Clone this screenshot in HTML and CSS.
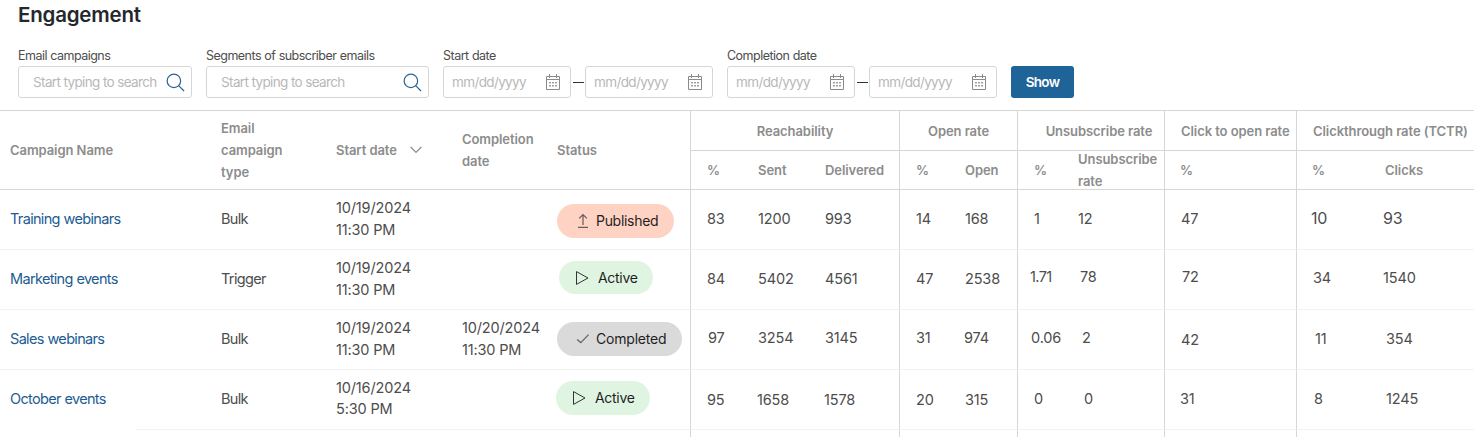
FILE: index.html
```html
<!DOCTYPE html>
<html lang="en">
<head>
<meta charset="utf-8">
<title>Engagement</title>
<link rel="stylesheet" href="styles.css">
</head>
<body>
<svg class="sprite" aria-hidden="true">
  <symbol id="search" viewBox="0 0 20 20"><circle cx="8.3" cy="8.3" r="7.1"/><path d="M13.3 13.3 19 19"/></symbol>
  <symbol id="calendar" viewBox="0 0 16 18"><path d="M1.5 3.5h13v13h-13zM1.5 6.5h13M4.5 1v4M11.5 1v4"/><path class="dots" d="M4.200 9h1.600v1.600H4.200zM7.200 9h1.600v1.600H7.200zM10.200 9h1.600v1.600h-1.600zM4.200 12h1.600v1.600H4.200zM7.200 12h1.600v1.600H7.200zM10.200 12h1.600v1.600h-1.600z"/></symbol>
  <symbol id="upload" viewBox="0 0 12 16"><path d="M6 12V2M2.2 5.3 6 1.500l3.800 3.800M1 14.300h10"/></symbol>
  <symbol id="play" viewBox="0 0 14 16"><path d="M1.500 1.600v12.800L13 8z"/></symbol>
  <symbol id="check" viewBox="0 0 14 12"><path d="M1.200 6.400 4.800 9.600 12.600 1.600"/></symbol>
</svg>

<h1 class="title">Engagement</h1>

<form class="filters">
  <div class="field field-campaigns">
    <label class="label">Email campaigns</label>
    <div class="input"><span>Start typing to search</span><svg class="icon-search"><use href="#search"/></svg></div>
  </div>
  <div class="field field-segments">
    <label class="label">Segments of subscriber emails</label>
    <div class="input"><span>Start typing to search</span><svg class="icon-search"><use href="#search"/></svg></div>
  </div>
  <div class="field">
    <label class="label">Start date</label>
    <div class="range">
      <div class="input date"><span>mm/dd/yyyy</span><svg class="icon-calendar"><use href="#calendar"/></svg></div>
      <i class="dash"></i>
      <div class="input date"><span>mm/dd/yyyy</span><svg class="icon-calendar"><use href="#calendar"/></svg></div>
    </div>
  </div>
  <div class="field">
    <label class="label">Completion date</label>
    <div class="range">
      <div class="input date"><span>mm/dd/yyyy</span><svg class="icon-calendar"><use href="#calendar"/></svg></div>
      <i class="dash"></i>
      <div class="input date"><span>mm/dd/yyyy</span><svg class="icon-calendar"><use href="#calendar"/></svg></div>
    </div>
  </div>
  <button class="show" type="button">Show</button>
</form>

<div class="table">
  <div class="row head">
    <div class="cell tall">Campaign Name</div>
    <div class="cell tall">Email<br>campaign<br>type</div>
    <div class="cell tall">Start date<svg class="icon-sort" viewBox="0 0 12 8"><path d="M.7 1 6 6.500 11.300 1"/></svg></div>
    <div class="cell tall">Completion<br>date</div>
    <div class="cell tall">Status</div>
    <div class="cell group span3">Reachability</div>
    <div class="cell group span2">Open rate</div>
    <div class="cell group span2 shifted">Unsubscribe rate</div>
    <div class="cell group start">Click to open rate</div>
    <div class="cell group span2 start">Clickthrough rate (TCTR)</div>
    <div class="cell first">%</div>
    <div class="cell">Sent</div>
    <div class="cell">Delivered</div>
    <div class="cell first">%</div>
    <div class="cell">Open</div>
    <div class="cell first">%</div>
    <div class="cell">Unsubscribe<br>rate</div>
    <div class="cell first back-1">%</div>
    <div class="cell first back-1">%</div>
    <div class="cell">Clicks</div>
  </div>

  <div class="row">
    <div class="cell text link">Training webinars</div>
    <div class="cell text">Bulk</div>
    <div class="cell">10/19/2024<br>11:30 PM</div>
    <div class="cell"></div>
    <div class="cell"><span class="pill published"><svg class="icon-upload"><use href="#upload"/></svg>Published</span></div>
    <div class="cell first">83</div>
    <div class="cell">1200</div>
    <div class="cell">993</div>
    <div class="cell first">14</div>
    <div class="cell">168</div>
    <div class="cell first">1</div>
    <div class="cell">12</div>
    <div class="cell first">47</div>
    <div class="cell first large back-2">10</div>
    <div class="cell large back-2">93</div>
  </div>

  <div class="row">
    <div class="cell text link">Marketing events</div>
    <div class="cell text">Trigger</div>
    <div class="cell">10/19/2024<br>11:30 PM</div>
    <div class="cell"></div>
    <div class="cell"><span class="pill active inset"><svg class="icon-play"><use href="#play"/></svg>Active</span></div>
    <div class="cell first">84</div>
    <div class="cell">5402</div>
    <div class="cell">4561</div>
    <div class="cell first">47</div>
    <div class="cell">2538</div>
    <div class="cell first condensed back-4 up-2">1.71</div>
    <div class="cell in-2 up-2">78</div>
    <div class="cell first in-1 up-2">72</div>
    <div class="cell first up-1">34</div>
    <div class="cell back-2 up-1">1540</div>
  </div>

  <div class="row">
    <div class="cell text link">Sales webinars</div>
    <div class="cell text">Bulk</div>
    <div class="cell">10/19/2024<br>11:30 PM</div>
    <div class="cell">10/20/2024<br>11:30 PM</div>
    <div class="cell"><span class="pill completed"><svg class="icon-check"><use href="#check"/></svg>Completed</span></div>
    <div class="cell first in-1 up-1">97</div>
    <div class="cell up-1">3254</div>
    <div class="cell up-1">3145</div>
    <div class="cell first up-1">31</div>
    <div class="cell back-1 up-1">974</div>
    <div class="cell first back-3 up-1">0.06</div>
    <div class="cell in-4 up-1">2</div>
    <div class="cell first down-1">42</div>
    <div class="cell first in-2">11</div>
    <div class="cell in-1">354</div>
  </div>

  <div class="row last">
    <div class="cell text link">October events</div>
    <div class="cell text">Bulk</div>
    <div class="cell tight">10/16/2024<br>5:30 PM</div>
    <div class="cell"></div>
    <div class="cell"><span class="pill active outset"><svg class="icon-play"><use href="#play"/></svg>Active</span></div>
    <div class="cell first down-1">95</div>
    <div class="cell back-1 down-1">1658</div>
    <div class="cell back-1 down-1">1578</div>
    <div class="cell first down-1">20</div>
    <div class="cell down-1">315</div>
    <div class="cell first">0</div>
    <div class="cell in-6">0</div>
    <div class="cell first back-1">31</div>
    <div class="cell first in-1">8</div>
    <div class="cell in-1">1245</div>
  </div>

  <div class="row rest">
    <div class="cell wide"></div>
    <div class="cell first span3"></div>
    <div class="cell first span2"></div>
    <div class="cell first span2"></div>
    <div class="cell first"></div>
    <div class="cell first span2"></div>
  </div>
</div>
</body>
</html>
```
FILE: styles.css
```css
* { box-sizing: border-box; }

body {
  margin: 0;
  width: 1474px;
  height: 437px;
  overflow: hidden;
  background: #fff;
  color: #4d4d4d;
  font: 14.5px/22px Inter, sans-serif;
  letter-spacing: -0.15px;
}

.sprite { display: none; }

svg { fill: none; flex: none; }

.title {
  margin: 0;
  padding: 0 0 0 18px;
  font-size: 20.5px;
  font-weight: 600;
  line-height: 30px;
  letter-spacing: -0.2px;
  color: #24282c;
}

/* Filters */
.filters {
  display: flex;
  align-items: flex-end;
  gap: 14px;
  height: 68px;
  padding-left: 18px;
}

.field { display: flex; flex-direction: column; }
.field-campaigns { width: 174px; }
.field-segments { width: 223px; }

.label {
  font-size: 12.5px;
  line-height: 20px;
  letter-spacing: -0.52px;
  word-spacing: 0.3px;
  white-space: nowrap;
}

.input {
  display: flex;
  align-items: center;
  justify-content: space-between;
  height: 32px;
  padding: 0 6px 0 14px;
  border: 1px solid #d6d6d6;
  border-radius: 3px;
  color: #b8b8b8;
  font-size: 13.5px;
  letter-spacing: -0.63px;
  white-space: nowrap;
}

.date { width: 128px; padding: 0 9px 0 8px; }

.range { display: flex; align-items: center; }
.dash { width: 11px; height: 1px; margin: 0 1px 0 2px; background: #333; }

.icon-search { width: 19px; height: 19px; stroke: #2a6496; stroke-width: 1.3; }
.icon-calendar { width: 16px; height: 18px; stroke: #8a8a8a; }
.dots { fill: #8a8a8a; stroke: none; }

.show {
  width: 63px;
  height: 32px;
  padding: 0;
  border: 0;
  border-radius: 3px;
  background: #1f6499;
  color: #fff;
  font: 600 13.5px/32px Inter, sans-serif;
  letter-spacing: -0.7px;
}

/* Report table */
.table { margin-top: 12px; border-top: 1px solid #d6d6d6; }

.row {
  display: grid;
  grid-template-columns: 211px 115px 126px 95px 143px 58px 67px 84px 56px 62px 51px 96px 132px 79px 99px;
  grid-template-rows: 60px;
}

.cell {
  display: flex;
  align-items: center;
  padding: 0 0 2px 10px;
  border-bottom: 1px solid #f2f2f2;
  white-space: nowrap;
}

.first { padding-left: 16px; border-left: 1px solid #d6d6d6; }
.text { letter-spacing: -0.67px; word-spacing: 0.3px; }
.link { color: #1c5c93; }
.condensed { letter-spacing: -0.6px; }
.tight { line-height: 21px; padding-bottom: 4px; }
.large { font-size: 16px; padding-bottom: 4px; }

.head {
  grid-template-rows: 40px 39px;
  font-size: 13px;
  font-weight: 600;
  letter-spacing: -0.07px;
  color: #8c8c8c;
}
.head .cell { padding-bottom: 0; border-bottom-color: #d6d6d6; }
.tall { grid-row: span 2; }
.span3 { grid-column: span 3; }
.span2 { grid-column: span 2; }
.wide { grid-column: span 5; }
.group { justify-content: center; padding-left: 0; border-left: 1px solid #d6d6d6; }
.group.start { justify-content: flex-start; padding-left: 16px; }
.group.shifted { padding-left: 16px; }

.icon-sort { width: 12px; height: 8px; margin-left: 13px; stroke: #8c8c8c; stroke-width: 1.2; }

.last .link {
  border-bottom: 0;
  padding-bottom: 3px;
  background: linear-gradient(#f2f2f2, #f2f2f2) 136px 100% / 75px 1px no-repeat;
}
.rest { grid-template-rows: 8px; }
.rest .cell { border-bottom: 0; }

/* Fine alignment of individual values */
.back-1 { text-indent: -1px; }
.back-2 { text-indent: -2px; }
.back-3 { text-indent: -3px; }
.back-4 { text-indent: -4px; }
.in-1 { text-indent: 1px; }
.in-2 { text-indent: 2px; }
.in-4 { text-indent: 4px; }
.in-6 { text-indent: 6px; }
.up-1 { padding-bottom: 4px; }
.up-2 { padding-bottom: 6px; }
.down-1 { padding-bottom: 0; }

/* Status pills */
.pill {
  display: flex;
  align-items: center;
  height: 34px;
  border-radius: 17px;
  color: #1f1f1f;
  font-size: 14px;
  letter-spacing: -0.3px;
}
.published { width: 117px; padding-left: 20px; margin-top: 5px; background: #ffd3c3; }
.active { width: 94px; padding-left: 16px; background: #dff5e1; }
.inset { height: 33px; margin: -2px 0 0 2px; }
.outset { margin: -1px 0 0 -1px; }
.completed { width: 125px; padding-left: 19px; background: #dadada; letter-spacing: -0.2px; }

.icon-upload { width: 12px; height: 16px; margin-right: 7px; stroke: #6b5a58; stroke-width: 1.2; }
.icon-play { width: 14px; height: 16px; margin-right: 9px; stroke: #333; }
.icon-check { width: 14px; height: 12px; margin-right: 6px; stroke: #666; stroke-width: 1.3; }
```
